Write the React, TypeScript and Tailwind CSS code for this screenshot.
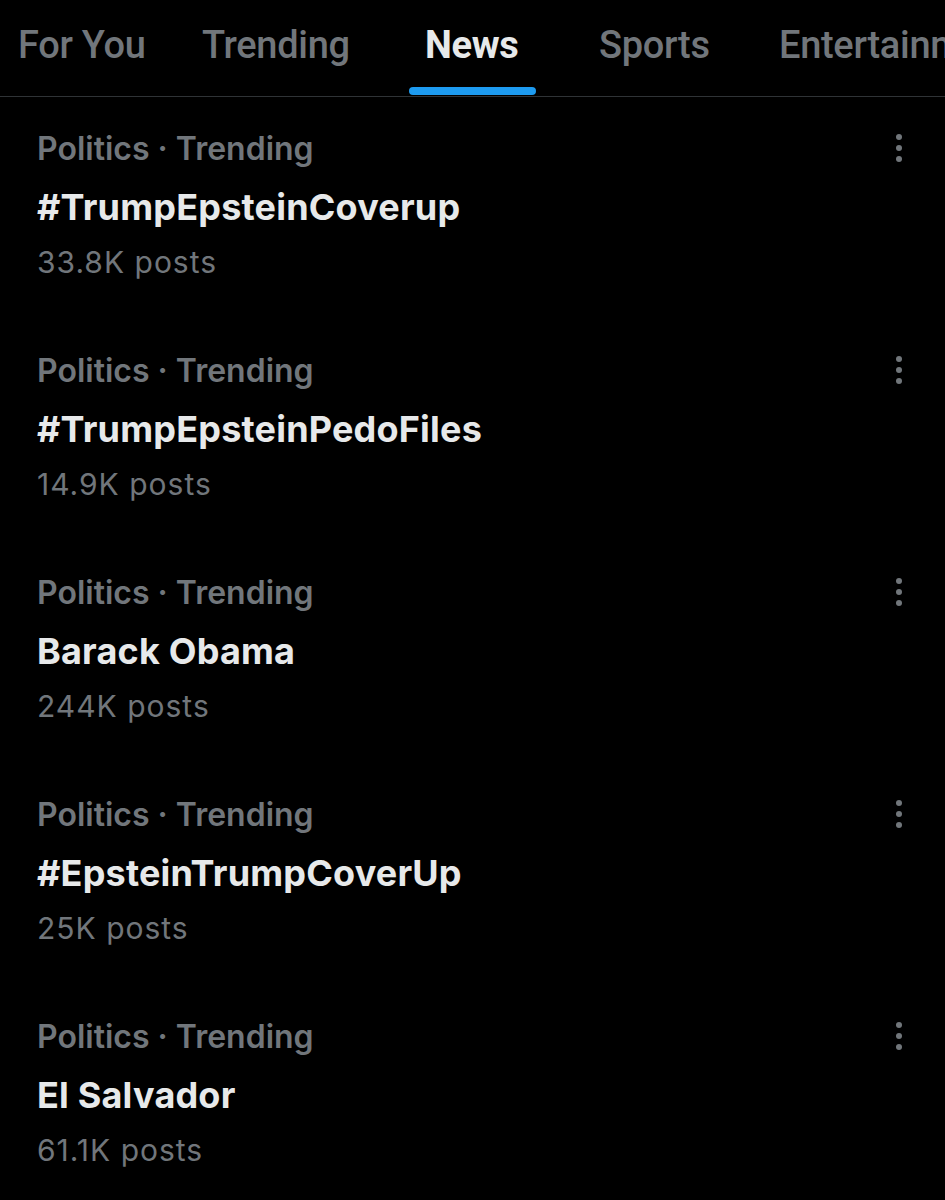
const tabs = [
  { label: "For You", w: "w-[184px]" },
  { label: "Trending", w: "w-[223px]" },
  { label: "News", w: "w-[174px]", active: true },
  { label: "Sports", w: "w-[180px]" },
  { label: "Entertainment", w: "w-[300px]" },
];

const trends = [
  { title: "#TrumpEpsteinCoverup", count: "33.8K posts" },
  { title: "#TrumpEpsteinPedoFiles", count: "14.9K posts" },
  { title: "Barack Obama", count: "244K posts" },
  { title: "#EpsteinTrumpCoverUp", count: "25K posts" },
  { title: "El Salvador", count: "61.1K posts" },
];

function MoreDots() {
  return (
    <div className="flex flex-col items-center gap-[5px] mt-[7px] pr-[43px]">
      <span className="w-[6px] h-[6px] rounded-full bg-[#71767b]" />
      <span className="w-[6px] h-[6px] rounded-full bg-[#71767b]" />
      <span className="w-[6px] h-[6px] rounded-full bg-[#71767b]" />
    </div>
  );
}

export default function App() {
  return (
    <div
      className="w-[945px] h-[1200px] bg-black overflow-hidden"
      style={{ fontFamily: "Inter, 'Noto Sans', sans-serif" }}
    >
      {/* tabs */}
      <div
        className="h-[97px] border-b border-[#2f3336] flex items-start pl-[18px] whitespace-nowrap overflow-hidden"
        style={{ fontFamily: "Roboto, 'Noto Sans', sans-serif" }}
      >
        {tabs.map((t) => (
          <div key={t.label} className={`${t.w} shrink-0 relative h-full`}>
            <span
              className={`block pt-[17px] text-[38px] leading-[56px] tracking-[-0.3px] ${
                t.active ? "text-[#e7e9ea] font-bold" : "text-[#71767b] font-medium"
              }`}
            >
              {t.label}
            </span>
            {t.active && (
              <span className="absolute left-[-16px] bottom-[1px] w-[127px] h-[8px] rounded-full bg-[#1d9bf0]" />
            )}
          </div>
        ))}
      </div>

      {/* trends */}
      {trends.map((t) => (
        <div key={t.title} className="h-[222px] flex items-start justify-between pl-[37px] pt-[30px]">
          <div className="flex flex-col">
            <span className="text-[32px] leading-[44px] font-semibold text-[#71767b]">
              Politics · Trending
            </span>
            <span className="mt-[12px] text-[36px] leading-[48px] font-bold tracking-[0.2px] text-[#e7e9ea]">
              {t.title}
            </span>
            <span className="mt-[9px] text-[30px] leading-[44px] tracking-[1px] text-[#71767b]">
              {t.count}
            </span>
          </div>
          <MoreDots />
        </div>
      ))}
    </div>
  );
}
